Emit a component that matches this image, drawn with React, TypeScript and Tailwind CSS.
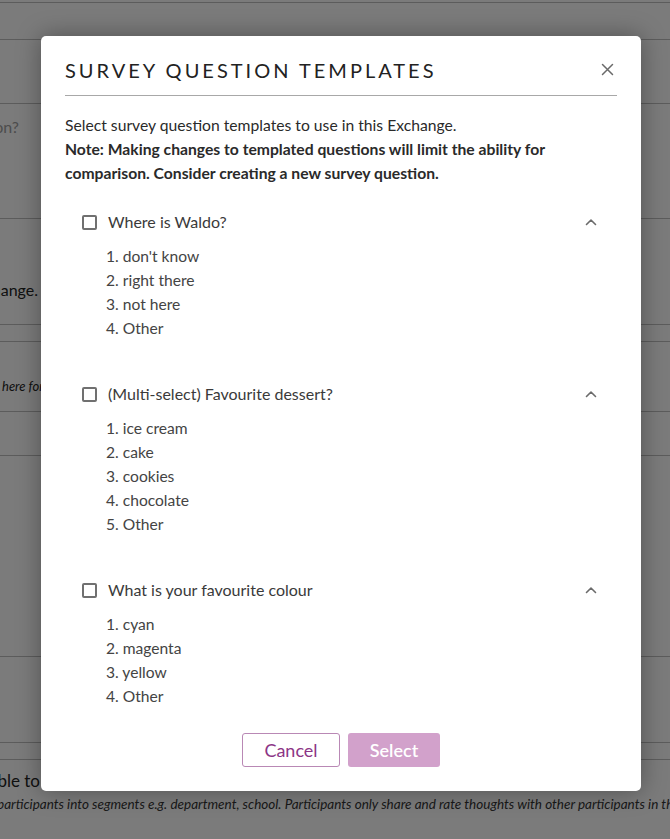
import React from "react";

interface Question {
  title: string;
  options: string[];
}

const questions: Question[] = [
  {
    title: "Where is Waldo?",
    options: ["don't know", "right there", "not here", "Other"],
  },
  {
    title: "(Multi-select) Favourite dessert?",
    options: ["ice cream", "cake", "cookies", "chocolate", "Other"],
  },
  {
    title: "What is your favourite colour",
    options: ["cyan", "magenta", "yellow", "Other"],
  },
];

function Chevron() {
  return (
    <svg width="12" height="8" viewBox="0 0 12 8" fill="none">
      <polyline
        points="1.5,6.5 6,2 10.5,6.5"
        stroke="#6b6b6b"
        strokeWidth="1.6"
        strokeLinecap="round"
        strokeLinejoin="round"
      />
    </svg>
  );
}

function CloseIcon() {
  return (
    <svg width="13" height="13" viewBox="0 0 13 13" fill="none">
      <path d="M1.5 1.5 L11.5 11.5 M11.5 1.5 L1.5 11.5" stroke="#6a6a6a" strokeWidth="1.5" strokeLinecap="round" />
    </svg>
  );
}

function QuestionBlock({ q, first }: { q: Question; first: boolean }) {
  return (
    <div className={first ? "mt-[25px]" : "mt-[42px]"}>
      <div className="flex items-center h-6 pl-[17px] pr-[20px]">
        <span className="w-[15px] h-[15px] border-2 border-[#707070] rounded-[2px] shrink-0" />
        <span className="ml-[11px] text-[16px] leading-6 text-[#3a3a3a]">{q.title}</span>
        <span className="ml-auto flex items-center">
          <Chevron />
        </span>
      </div>
      <ol className="mt-[10px] pl-[41px]">
        {q.options.map((o, i) => (
          <li key={i} className="h-6 leading-6 text-[15.6px] text-[#444]">
            {i + 1}. {o}
          </li>
        ))}
      </ol>
    </div>
  );
}

export default function App() {
  return (
    <div
      className="relative w-[670px] h-[839px] overflow-hidden bg-[#f6f6f6]"
      style={{ fontFamily: "Lato, 'Open Sans', sans-serif" }}
    >
      {/* page behind the dialog */}
      <div className="flex flex-col text-[#222]">
        <div className="h-[3px] border-b border-[#b8b8b8]" />
        <div className="h-[37px] border-b border-[#b8b8b8]" />
        <div className="h-[64px] border-b border-[#b8b8b8]" />
        <div className="h-[115px] border-b border-[#b8b8b8] pt-[11px]">
          <div className="w-[19px] flex justify-end text-[16px] text-[#9a9a9a] leading-6">
            <span className="whitespace-nowrap">this question?</span>
          </div>
        </div>
        <div className="h-[106px] border-b border-[#b8b8b8] pt-[59px]">
          <div className="w-[38px] flex justify-end text-[16px] leading-6">
            <span className="whitespace-nowrap">in this Exchange.</span>
          </div>
        </div>
        <div className="h-[17px] border-b border-[#b8b8b8]" />
        <div className="h-[70px] border-b border-[#b8b8b8] pt-[31px]">
          <span className="ml-[2px] italic text-[13px] leading-4 whitespace-nowrap">here for more information</span>
        </div>
        <div className="h-[44px] border-b border-[#b8b8b8]" />
        <div className="h-[201px] border-b border-[#b8b8b8]" />
        <div className="h-[86px] border-b border-[#b8b8b8]" />
        <div className="h-[17px] border-b border-[#b8b8b8]" />
        <div className="pt-[9px]">
          <div className="-ml-[11px] text-[17px] leading-6 whitespace-nowrap">able to link segments</div>
          <div className="-ml-[3px] mt-[1px] italic text-[13.5px] leading-5 text-[#333] whitespace-nowrap">
            participants into segments e.g. department, school. Participants only share and rate thoughts with other participants in their segment.
          </div>
        </div>
      </div>

      {/* overlay + dialog */}
      <div className="absolute inset-0 bg-black/50">
        <div className="ml-[41px] mt-[36px] w-[600px] h-[755px] bg-white rounded-[5px] shadow-[0_0_24px_rgba(0,0,0,0.35)] px-6 flex flex-col">
          <div className="flex items-center pt-[20px] pb-[11px] border-b border-[#a8a8a8]">
            <h1 className="text-[20px] leading-7 tracking-[0.15em] text-[#222] font-normal">
              SURVEY QUESTION TEMPLATES
            </h1>
            <span className="ml-auto mr-[3px] -mt-[2px] flex items-center">
              <CloseIcon />
            </span>
          </div>
          <div className="mt-[17px] text-[15.7px] leading-6 text-[#2a2a2a]">
            <p>Select survey question templates to use in this Exchange.</p>
            <p className="font-bold">
              Note: Making changes to templated questions will limit the ability for comparison. Consider creating a
              new survey question.
            </p>
          </div>
          {questions.map((q, i) => (
            <QuestionBlock key={i} q={q} first={i === 0} />
          ))}
          <div className="mt-[25px] flex justify-center gap-2">
            <button className="w-[98px] h-[34px] rounded-[3px] border border-[#b988b5] text-[18px] text-[#8c3586] bg-white">
              Cancel
            </button>
            <button className="w-[92px] h-[34px] rounded-[3px] bg-[#d2a1cb] text-[18px] text-white font-semibold">
              Select
            </button>
          </div>
        </div>
      </div>
    </div>
  );
}
